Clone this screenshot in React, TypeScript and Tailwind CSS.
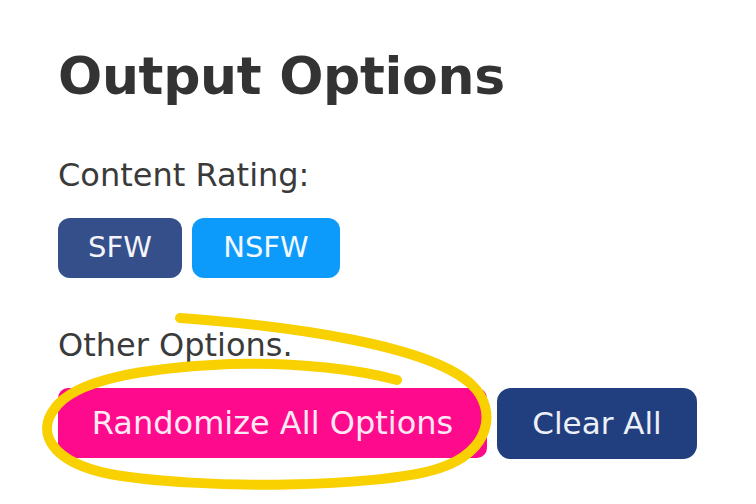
import React from "react"

const font = { fontFamily: "'DejaVu Sans', sans-serif" }

export default function App() {
  return (
    <div className="relative w-[756px] h-[504px] bg-white overflow-hidden" style={font}>
      <div className="pl-[58px] pt-[44px]">
        <h1 className="text-[52px] leading-[64px] font-bold text-[#333333] tracking-[-0.3px]">Output Options</h1>

        <p className="mt-[48px] text-[32px] leading-[38px] text-[#3a3a3a]">Content Rating:</p>
        <div className="mt-[24px] flex gap-[10px]">
          <button className="w-[124px] h-[60px] rounded-[12px] bg-[#354f8b] text-[#f4f4fa] text-[29px]">SFW</button>
          <button className="w-[148px] h-[60px] rounded-[12px] bg-[#0d9bfb] text-[#f4f8ff] text-[29px]">NSFW</button>
        </div>

        <p className="mt-[48px] text-[32px] leading-[38px] text-[#3a3a3a]">Other Options.</p>
        <div className="mt-[24px] flex gap-[10px]">
          <button className="w-[429px] h-[70px] rounded-[10px] bg-[#fe0a8d] text-[#fde8f4] text-[32px]">
            Randomize All Options
          </button>
          <button className="w-[200px] h-[71px] rounded-[14px] bg-[#213f7f] text-[#eef0f8] text-[31px]">
            Clear All
          </button>
        </div>
      </div>

      {/* gelber Kringel */}
      <svg className="absolute top-0 left-0 pointer-events-none" width="756" height="504">
        <path
          d="M180 318 C 290 326, 430 345, 472 385 C 498 410, 490 452, 440 468 C 380 488, 200 490, 110 474 C 50 462, 36 432, 55 408 C 75 380, 140 368, 230 364 C 300 362, 360 370, 397 380"
          fill="none"
          stroke="#f9d000"
          strokeWidth="10"
          strokeLinecap="round"
        />
      </svg>
    </div>
  )
}
